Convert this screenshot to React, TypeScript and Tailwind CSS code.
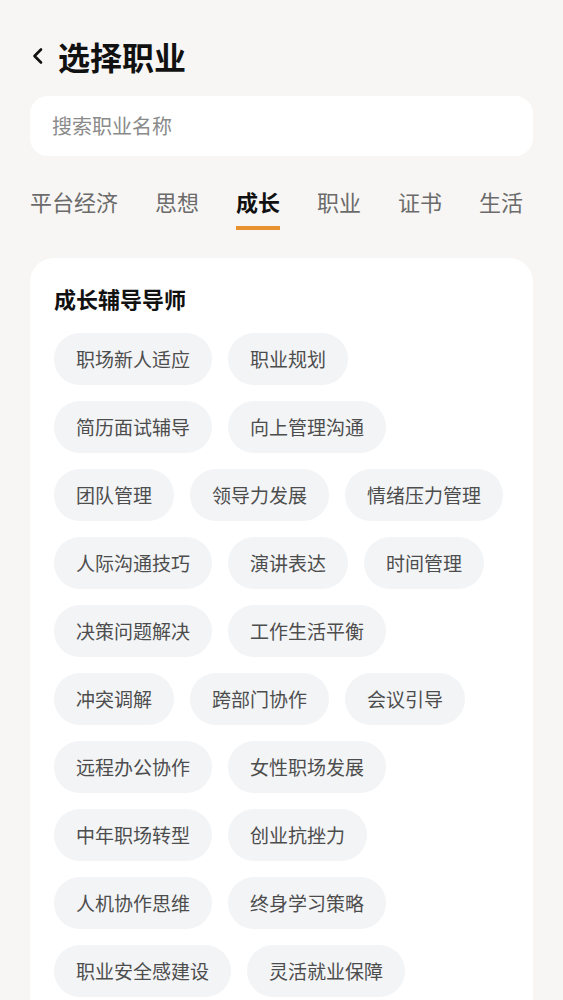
import React from 'react';

const tabs = ['平台经济', '思想', '成长', '职业', '证书', '生活'];

const mentors = [
  '职场新人适应',
  '职业规划',
  '简历面试辅导',
  '向上管理沟通',
  '团队管理',
  '领导力发展',
  '情绪压力管理',
  '人际沟通技巧',
  '演讲表达',
  '时间管理',
  '决策问题解决',
  '工作生活平衡',
  '冲突调解',
  '跨部门协作',
  '会议引导',
  '远程办公协作',
  '女性职场发展',
  '中年职场转型',
  '创业抗挫力',
  '人机协作思维',
  '终身学习策略',
  '职业安全感建设',
  '灵活就业保障',
];

export default function App() {
  return (
    <div
      className="min-h-screen bg-[#f7f6f4] px-[30px] pt-[36px] pb-10"
      style={{ fontFamily: '"Noto Sans CJK SC", "Noto Sans", sans-serif' }}
    >
      {/* Header */}
      <div className="flex h-[40px] items-center gap-[14px]">
        <button className="flex h-[40px] w-[14px] items-center justify-center">
          <svg width="13" height="18" viewBox="0 0 13 18" fill="none">
            <path d="M10 2.5 L3.5 9 L10 15.5" stroke="#111" strokeWidth="2.6" strokeLinecap="round" strokeLinejoin="round" />
          </svg>
        </button>
        <h1 className="text-[32px] font-bold leading-[40px] text-[#111]">选择职业</h1>
      </div>

      {/* Search */}
      <div className="mt-[20px] flex h-[60px] items-center rounded-[18px] bg-white px-[22px]">
        <input
          className="w-full bg-transparent text-[20px] text-[#333] outline-none placeholder:text-[#8a8a8a]"
          placeholder="搜索职业名称"
        />
      </div>

      {/* Tabs */}
      <div className="mt-[30px] flex gap-[37px]">
        {tabs.map((t) => {
          const active = t === '成长';
          return (
            <div key={t} className="flex flex-col items-stretch">
              <span
                className={
                  active
                    ? 'text-[22px] font-bold leading-[30px] text-[#111]'
                    : 'text-[22px] leading-[30px] text-[#6b6b6b]'
                }
              >
                {t}
              </span>
              <div className={active ? 'mt-[10px] h-[4px] bg-[#e8912f]' : 'mt-[10px] h-[4px]'} />
            </div>
          );
        })}
      </div>

      {/* Card */}
      <div className="mt-[28px] rounded-3xl bg-white px-[24px] pt-[25px] pb-[24px]">
        <h2 className="text-[22px] font-bold leading-[30px] text-[#111]">成长辅导导师</h2>
        <div className="mt-[20px] flex flex-wrap gap-[16px]">
          {mentors.map((m) => (
            <button
              key={m}
              className="flex h-[52px] items-center rounded-full bg-[#f3f4f6] px-[22px] text-[19px] text-[#4d4d4d]"
            >
              {m}
            </button>
          ))}
        </div>
      </div>
    </div>
  );
}
